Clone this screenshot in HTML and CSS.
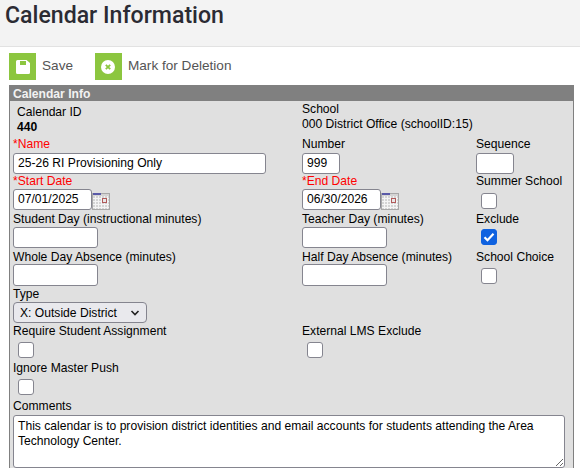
FILE: index.html
```html
<!DOCTYPE html>
<html>

<head>
  <meta charset="utf-8">
  <title>Calendar Information</title>
  <link rel="stylesheet" href="styles.css">
</head>

<body>
  <header class="page-header">
    <h1>Calendar Information</h1>
  </header>

  <div class="toolbar">
    <a class="tool-button">
      <span class="tool-icon">
        <svg width="14" height="14" viewBox="0 0 14 14">
          <path d="M1.500 0h9l3.500 3v9.500a1.500 1.500 0 0 1-1.500 1.500h-11A1.500 1.500 0 0 1 0 12.500v-11A1.500 1.500 0 0 1 1.500 0z" fill="#fff" />
          <rect x="4" y="1" width="6" height="4" fill="#8cc63f" />
        </svg>
      </span>
      <span class="tool-label">Save</span>
    </a>
    <a class="tool-button">
      <span class="tool-icon">
        <svg width="14" height="14" viewBox="0 0 14 14">
          <circle cx="7" cy="7" r="7" fill="#fff" />
          <path d="M4.800 4.800l4.400 4.400M9.200 4.800l-4.400 4.400" stroke="#8cc63f" stroke-width="1.800" />
        </svg>
      </span>
      <span class="tool-label">Mark for Deletion</span>
    </a>
  </div>

  <section class="panel">
    <div class="panel-title">Calendar Info</div>
    <form class="panel-body">
      <div class="row row-top">
        <div class="cell indent">
          <label>Calendar ID</label>
          <div class="value bold">440</div>
        </div>
        <div class="cell wide">
          <label>School</label>
          <div class="value">000 District Office (schoolID:15)</div>
        </div>
      </div>

      <div class="row gap-2">
        <div class="cell">
          <label class="required">*Name</label>
          <input type="text" class="input input-name" value="25-26 RI Provisioning Only">
        </div>
        <div class="cell">
          <label>Number</label>
          <input type="text" class="input input-short" value="999">
        </div>
        <div class="cell">
          <label>Sequence</label>
          <input type="text" class="input input-short">
        </div>
      </div>

      <div class="row">
        <div class="cell">
          <label class="required">*Start Date</label>
          <div class="date-field">
            <input type="text" class="input input-date" value="07/01/2025">
            <svg class="cal-icon" width="18" height="17" viewBox="0 0 18 17">
              <rect x="0.5" y="0.5" width="17" height="16" fill="#d4d4d4" stroke="#a8a8a8" />
              <rect x="1" y="0" width="8" height="2" fill="#5a5aa8" />
              <path d="M1 5.500h16M1 8.500h16M1 11.500h16M1 14.500h16M3.500 3v13M6.500 3v13M9.500 3v13M12.500 3v13M15.500 3v13" stroke="#f4f4f4" />
              <rect x="10.500" y="5.500" width="4" height="4" fill="#e8e8e8" stroke="#b05a5a" />
            </svg>
          </div>
        </div>
        <div class="cell">
          <label class="required">*End Date</label>
          <div class="date-field">
            <input type="text" class="input input-date" value="06/30/2026">
            <svg class="cal-icon" width="18" height="17" viewBox="0 0 18 17">
              <rect x="0.5" y="0.5" width="17" height="16" fill="#d4d4d4" stroke="#a8a8a8" />
              <rect x="1" y="0" width="8" height="2" fill="#5a5aa8" />
              <path d="M1 5.500h16M1 8.500h16M1 11.500h16M1 14.500h16M3.500 3v13M6.500 3v13M9.500 3v13M12.500 3v13M15.500 3v13" stroke="#f4f4f4" />
              <rect x="10.500" y="5.500" width="4" height="4" fill="#e8e8e8" stroke="#b05a5a" />
            </svg>
          </div>
        </div>
        <div class="cell">
          <label>Summer School</label>
          <span class="check check-low"></span>
        </div>
      </div>

      <div class="row">
        <div class="cell">
          <label>Student Day (instructional minutes)</label>
          <input type="text" class="input input-mid">
        </div>
        <div class="cell">
          <label>Teacher Day (minutes)</label>
          <input type="text" class="input input-mid">
        </div>
        <div class="cell">
          <label>Exclude</label>
          <span class="check check-high checked">
            <svg width="16" height="16" viewBox="0 0 16 16">
              <path d="M3.500 8.200l3 3 6-6.400" fill="none" stroke="#fff" stroke-width="2.200" />
            </svg>
          </span>
        </div>
      </div>

      <div class="row gap-0 tall">
        <div class="cell">
          <label>Whole Day Absence (minutes)</label>
          <input type="text" class="input input-mid">
        </div>
        <div class="cell">
          <label>Half Day Absence (minutes)</label>
          <input type="text" class="input input-mid">
        </div>
        <div class="cell">
          <label>School Choice</label>
          <span class="check"></span>
        </div>
      </div>

      <div class="row">
        <div class="cell">
          <label>Type</label>
          <div class="select">
            X: Outside District
            <svg width="10" height="6" viewBox="0 0 10 6">
              <path d="M1.500 1l3.500 3.500L8.500 1" fill="none" stroke="#222" stroke-width="1.600" />
            </svg>
          </div>
        </div>
      </div>

      <div class="row">
        <div class="cell">
          <label>Require Student Assignment</label>
          <span class="check"></span>
        </div>
        <div class="cell wide">
          <label>External LMS Exclude</label>
          <span class="check"></span>
        </div>
      </div>

      <div class="row">
        <div class="cell">
          <label>Ignore Master Push</label>
          <span class="check"></span>
        </div>
      </div>

      <div class="comments">
        <label>Comments</label>
        <textarea class="input comment-box">This calendar is to provision district identities and email accounts for students attending the Area Technology Center.</textarea>
      </div>
    </form>
  </section>
</body>

</html>
```

FILE: styles.css
```css
html,
body {
  height: 468px;
  overflow: hidden;
}

body {
  margin: 0;
  background-color: #fff;
  color: #000;
  font-family: "Liberation Sans", Arial, sans-serif;
  font-size: 12.12px;
}

.page-header {
  height: 47px;
  box-sizing: border-box;
  padding-left: 5px;
  background-color: #f3f3f3;
  border-bottom: 1px solid #e2e2e2;
}

.page-header h1 {
  margin: 0;
  padding-top: 2px;
  color: #2b2b33;
  font-family: Roboto, sans-serif;
  font-size: 23.1px;
  font-weight: 500;
  line-height: 28px;
}

.toolbar {
  display: flex;
  gap: 22px;
  height: 38px;
  box-sizing: border-box;
  padding: 6px 0 0 9px;
}

.tool-button {
  display: flex;
  align-items: center;
  gap: 6px;
  height: 27px;
  color: #555;
  font-size: 13.6px;
}

.tool-label {
  margin-bottom: 3px;
}

.tool-icon {
  display: flex;
  align-items: center;
  justify-content: center;
  width: 27px;
  height: 27px;
  background-color: #8cc63f;
}

.panel {
  width: 565px;
  margin-left: 9px;
  box-sizing: border-box;
  border: 1px solid #808080;
  border-top: 0;
  background-color: #e0e0e0;
}

.panel-title {
  height: 16px;
  margin: 0 -1px;
  padding-left: 4px;
  background-color: #808080;
  color: #f2f2f2;
  font-weight: bold;
  line-height: 18px;
}

.panel-body {
  display: grid;
  grid-template-rows: 36px 37px 38px 38px 37px 37px 37px 38px auto;
  padding: 0 0 0 3px;
}

.row {
  display: grid;
  grid-template-columns: 289px 174px 1fr;
}

.row-top {
  padding-top: 1px;
}

.cell label,
.comments label {
  display: block;
  height: 14px;
  line-height: 14px;
}

.indent {
  padding-top: 3px;
  padding-left: 4px;
}

.wide {
  grid-column: 2 / 4;
}

.value {
  margin-top: 1px;
  line-height: 14px;
}

.bold {
  font-weight: bold;
}

.required {
  color: #f00;
}

.input {
  display: block;
  box-sizing: border-box;
  height: 21px;
  margin: 1px 0 0;
  padding: 0 4px 2px;
  border: 1px solid #85858f;
  border-radius: 3px;
  background-color: #fff;
  color: #000;
  font-family: "Liberation Sans", Arial, sans-serif;
  font-size: 12.12px;
}

.gap-0 .input {
  margin-top: 0;
}

.gap-2 .input {
  margin-top: 2px;
}

.tall .input {
  height: 22px;
}

.input-name {
  width: 253px;
}

.input-short {
  width: 38px;
}

.input-date {
  width: 79px;
}

.input-mid {
  width: 85px;
}

.date-field {
  display: flex;
  align-items: flex-end;
}

.check {
  display: block;
  box-sizing: border-box;
  width: 16px;
  height: 16px;
  margin: 4px 0 0 5px;
  border: 1px solid #85858f;
  border-radius: 3px;
  background-color: #fff;
}

.check-low {
  margin-top: 5px;
}

.check-high {
  margin-top: 3px;
}

.checked {
  background-color: #0f62e0;
  border-color: #0f62e0;
}

.checked svg {
  display: block;
  margin: -1px;
}

.select {
  display: flex;
  align-items: center;
  justify-content: space-between;
  box-sizing: border-box;
  width: 134px;
  height: 21px;
  margin-top: 1px;
  padding: 0 6px;
  border: 1px solid #85858f;
  border-radius: 4px;
  background-color: #e9e9ed;
}

.comment-box {
  width: 552px;
  height: 53px;
  margin: 2px 0 0;
  padding: 3px 4px;
  line-height: 15px;
  resize: vertical;
}
```
